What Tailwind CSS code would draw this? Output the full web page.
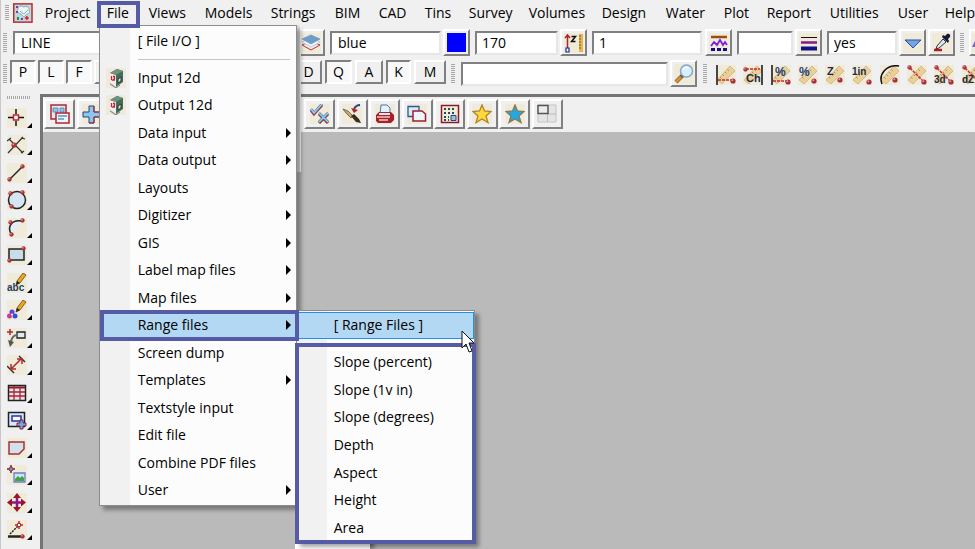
<!DOCTYPE html>
<html lang="en">
<head>
    <meta charset="UTF-8">
    <meta name="viewport" content="width=device-width, initial-scale=1.0">
    <title>12d Model</title>
    <script src="https://cdn.jsdelivr.net/npm/@tailwindcss/browser@4"></script>
</head>
<body class="bg-[#f0f0f0] text-black text-[14px] leading-5 font-['Open_Sans','Noto_Sans',sans-serif] overflow-hidden">

<!-- Shared icon parts -->
<svg class="hidden">
    <symbol id="ball" viewBox="0 0 6 6"><circle cx="3" cy="3" r="2.6" fill="#a8303a"/><circle cx="2.3" cy="2.2" r="1" fill="#e09a9c"/></symbol>
    <symbol id="ruler" viewBox="0 0 20 20">
        <rect width="20" height="20" fill="#f0ead8"/>
        <path d="M1 15 14 1l5 5L6 19z" fill="#e9cf9a" stroke="#d2b27a" stroke-width=".8"/>
        <path d="m4 12 1.500 1.500M6.500 9.500 8 11m1-4 1.500 1.500M11.500 4.500 13 6" stroke="#a3834a" stroke-width=".8" fill="none"/>
    </symbol>
    <symbol id="box12d" viewBox="0 0 20 20">
        <rect width="20" height="20" fill="#efeadb"/>
        <path d="m4 5 7-4 6 2v11l-7 5-6-4z" fill="#3f6f5b"/>
        <path d="m4 5 6 2v12l-6-4z" fill="#f3eeee"/>
        <path d="m4 5 7-4 6 2-7 4z" fill="#71917f"/>
        <path d="M5.500 8v4M7 8.500h1.500v2L7 12h2" stroke="#c8202c" stroke-width="1.300" fill="none"/>
        <path d="M12 11v4l3-2V9z" fill="#dfe5e0" stroke="#26382f"/>
        <path d="m4 16 6 4 4-3" stroke="#777" fill="none"/>
    </symbol>
    <symbol id="pencil" viewBox="0 0 20 20"><path d="m9 12 1-4 6-8 3 2-6 8z" fill="#e9a520" stroke="#6b4a14" stroke-width=".8"/><path d="m9 12 1-4 3 2z" fill="#222"/></symbol>
</svg>

<div class="relative flex flex-col min-h-screen border-l border-[#c8c8c8]">

    <!-- Menu bar -->
    <header class="flex h-[25px] mb-[2px] items-center pl-1">
        <span class="w-1 h-4 mr-1 bg-[repeating-linear-gradient(#a8a8a8_0_1px,#f0f0f0_1px_2px)]"></span>
        <svg class="w-5 h-5 mr-3" viewBox="0 0 20 20">
            <rect x=".75" y=".75" width="18.500" height="18.500" fill="#b9dce0" stroke="#c0272d" stroke-width="1.500"/>
            <path d="M5 6c0-3 4-4 6-2 3-2 6 1 5 3 2 2 0 4-2 4l-3 3-3-3c-3 0-4-3-3-5z" fill="#eef6f6" stroke="#8aa"/>
            <path d="m7 8 4 3 4-4" stroke="#7ba4ae" fill="none"/>
            <path d="M3 3h2v2H3zM3 8h2v2H3z" fill="#8a30a8"/><path d="M4 14h2v3H4z" fill="#168a3a"/><path d="M8 15h2v2H8z" fill="#7a1fb0"/><path d="M12 15h4M14 13v4" stroke="#e02020" stroke-width="1.500"/>
        </svg>
        <nav class="flex flex-1 h-full items-center whitespace-nowrap">
            <button class="w-[53px] text-left">Project</button>
            <div class="relative flex h-full items-center w-[51px] pl-[9px]">
                <button>File</button>
                <span class="absolute -left-px top-px w-[43px] h-[27px] border-4 border-[#555ba4] z-30"></span>

                <!-- File menu -->
                <div class="absolute left-px top-[25px] w-[198px] border border-[#8c8c8c] bg-[linear-gradient(to_right,#f1f1f1_30px,#fcfcfc_30px)] shadow-[4px_4px_4px_rgba(0,0,0,0.35)] py-px z-20">
                    <button class="flex w-full h-7 items-center pl-[38px]">[ File I/O ]</button>
                    <div class="h-[9px] pt-1 pl-[38px] pr-[6px]"><hr class="border-[#c4c4c4]"></div>
                    <div class="grid auto-rows-fr h-[440px]">
                        <button class="relative flex items-center pl-[38px]"><svg class="absolute left-[6px] w-5 h-5"><use href="#box12d"/></svg>Input 12d</button>
                        <button class="relative flex items-center pl-[38px]"><svg class="absolute left-[6px] w-5 h-5"><use href="#box12d"/></svg>Output 12d</button>
                        <button class="flex items-center justify-between pl-[38px] pr-[5px]">Data input<svg class="w-[5px] h-[10px]" viewBox="0 0 5 10"><path d="M0 0v10l5-5z"/></svg></button>
                        <button class="flex items-center justify-between pl-[38px] pr-[5px]">Data output<svg class="w-[5px] h-[10px]" viewBox="0 0 5 10"><path d="M0 0v10l5-5z"/></svg></button>
                        <button class="flex items-center justify-between pl-[38px] pr-[5px]">Layouts<svg class="w-[5px] h-[10px]" viewBox="0 0 5 10"><path d="M0 0v10l5-5z"/></svg></button>
                        <button class="flex items-center justify-between pl-[38px] pr-[5px]">Digitizer<svg class="w-[5px] h-[10px]" viewBox="0 0 5 10"><path d="M0 0v10l5-5z"/></svg></button>
                        <button class="flex items-center justify-between pl-[38px] pr-[5px]">GIS<svg class="w-[5px] h-[10px]" viewBox="0 0 5 10"><path d="M0 0v10l5-5z"/></svg></button>
                        <button class="flex items-center justify-between pl-[38px] pr-[5px]">Label map files<svg class="w-[5px] h-[10px]" viewBox="0 0 5 10"><path d="M0 0v10l5-5z"/></svg></button>
                        <button class="flex items-center justify-between pl-[38px] pr-[5px]">Map files<svg class="w-[5px] h-[10px]" viewBox="0 0 5 10"><path d="M0 0v10l5-5z"/></svg></button>
                        <div class="relative flex bg-[#b3d8f3]">
                            <button class="flex flex-1 items-center justify-between pl-[38px] pr-[5px]">Range files<svg class="w-[5px] h-[10px]" viewBox="0 0 5 10"><path d="M0 0v10l5-5z"/></svg></button>
                            <span class="absolute -top-[2px] -bottom-[2px] left-0 -right-[3px] border-4 border-[#555ba4] z-20"></span>

                            <!-- Range files submenu -->
                            <div class="absolute left-[196px] -top-[2px] w-[179px] border border-[#8c8c8c] bg-[linear-gradient(to_right,#f1f1f1_30px,#fcfcfc_30px)] shadow-[4px_4px_4px_rgba(0,0,0,0.35)] pt-px z-10">
                                <button class="flex w-full h-[27px] items-center pl-[36px] bg-[#b3d8f3] border border-[#2391ea]">[ Range Files ]</button>
                                <div class="relative pt-[10px]">
                                    <div class="grid auto-rows-fr h-[193px]">
                                        <button class="flex items-center pl-[37px]">Slope (percent)</button>
                                        <button class="flex items-center pl-[37px]">Slope (1v in)</button>
                                        <button class="flex items-center pl-[37px]">Slope (degrees)</button>
                                        <button class="flex items-center pl-[37px]">Depth</button>
                                        <button class="flex items-center pl-[37px]">Aspect</button>
                                        <button class="flex items-center pl-[37px]">Height</button>
                                        <button class="flex items-center pl-[37px]">Area</button>
                                    </div>
                                    <span class="absolute top-1 -bottom-[2px] -left-[2px] -right-[2px] border-4 border-[#555ba4]"></span>
                                    <svg class="absolute -top-[9px] right-0 w-[13px] h-[23px]" viewBox="0 0 13 23"><path d="M1 1v17l4-4 3 8 3-1-3-8h5z" fill="#fff" stroke="#111"/></svg>
                                </div>
                            </div>
                        </div>
                        <button class="flex items-center pl-[38px]">Screen dump</button>
                        <button class="flex items-center justify-between pl-[38px] pr-[5px]">Templates<svg class="w-[5px] h-[10px]" viewBox="0 0 5 10"><path d="M0 0v10l5-5z"/></svg></button>
                        <button class="flex items-center pl-[38px]">Textstyle input</button>
                        <button class="flex items-center pl-[38px]">Edit file</button>
                        <button class="flex items-center pl-[38px]">Combine PDF files</button>
                        <button class="flex items-center justify-between pl-[38px] pr-[5px]">User<svg class="w-[5px] h-[10px]" viewBox="0 0 5 10"><path d="M0 0v10l5-5z"/></svg></button>
                    </div>
                </div>
            </div>
            <button class="w-[56px] text-left">Views</button>
            <button class="w-[66px] text-left">Models</button>
            <button class="w-[64px] text-left">Strings</button>
            <button class="w-[44px] text-left">BIM</button>
            <button class="w-[46px] text-left">CAD</button>
            <button class="w-[44px] text-left">Tins</button>
            <button class="w-[60px] text-left">Survey</button>
            <button class="w-[73px] text-left">Volumes</button>
            <button class="w-[64px] text-left">Design</button>
            <button class="w-[58px] text-left">Water</button>
            <button class="w-[43px] text-left">Plot</button>
            <button class="w-[63px] text-left">Report</button>
            <button class="w-[68px] text-left">Utilities</button>
            <button class="w-[47px] text-left">User</button>
            <button class="text-left">Help</button>
        </nav>
    </header>

    <!-- String attribute toolbar -->
    <div class="flex h-[31px] items-center pl-[2px]">
        <span class="shrink-0 w-1 h-5 mr-[6px] bg-[repeating-linear-gradient(#a8a8a8_0_1px,#f0f0f0_1px_2px)]"></span>
        <input aria-label="Name" value="LINE" class="shrink-0 w-[280px] h-6 pl-[6px] bg-white border-2 border-t-[#808080] border-l-[#808080] border-r-[#e6e6e6] border-b-[#e6e6e6]">
        <button aria-label="Model" class="shrink-0 flex items-center justify-center w-[28px] h-[27px] ml-1 mr-[5px] border-2 border-t-white border-l-white border-r-[#808080] border-b-[#808080]">
            <svg class="w-5 h-5" viewBox="0 0 20 20"><rect width="20" height="20" fill="#f0ead8"/><path d="m1 12 9-4 9 4-9 5z" fill="#e8e8ee" stroke="#c8303c"/><path d="m1 9 9-4 9 4-9 5z" fill="#f3f6fb" stroke="#b4c4d6" stroke-width=".8"/><path d="m1 6 9-4 9 4-9 5z" fill="#6f9cc6" stroke="#6f9cc6" stroke-width=".8"/></svg>
        </button>
        <input aria-label="Colour" value="blue" class="shrink-0 w-[111px] h-6 pl-[6px] bg-white border-2 border-t-[#808080] border-l-[#808080] border-r-[#e6e6e6] border-b-[#e6e6e6]">
        <button aria-label="Pick colour" class="shrink-0 flex items-center justify-center w-[27px] h-[27px] ml-[2px] mr-[5px] border-2 border-t-white border-l-white border-r-[#808080] border-b-[#808080]"><span class="w-[19px] h-[19px] bg-[#0000ff]"></span></button>
        <input aria-label="Height" value="170" class="shrink-0 w-[83px] h-6 pl-[5px] bg-white border-2 border-t-[#808080] border-l-[#808080] border-r-[#e6e6e6] border-b-[#e6e6e6]">
        <button aria-label="Pick height" class="shrink-0 flex items-center justify-center w-[27px] h-[27px] ml-[2px] mr-[5px] border-2 border-t-white border-l-white border-r-[#808080] border-b-[#808080]">
            <svg class="w-5 h-5" viewBox="0 0 20 20"><rect width="20" height="20" fill="#f0ead8"/><path d="M3.500 2v13M1 5l2.500-3L6 5" fill="none" stroke="#b0222c" stroke-width="1.500"/><path d="M2 15h3v4H2z" fill="#fff" stroke="#1b2a80" stroke-width="1.200"/><path d="M7.500 3.500h4l-4 5h4" fill="none" stroke="#111" stroke-width="1.500"/><path d="M15 1h4v18h-4z" fill="#e9b54c"/><path d="M15 3h2m-2 3h2m-2 3h2m-2 3h2m-2 3h2" stroke="#7a5610"/></svg>
        </button>
        <input aria-label="Style" value="1" class="shrink-0 w-[110px] h-6 pl-[5px] bg-white border-2 border-t-[#808080] border-l-[#808080] border-r-[#e6e6e6] border-b-[#e6e6e6]">
        <button aria-label="Pick style" class="shrink-0 flex items-center justify-center w-[27px] h-[27px] ml-[3px] mr-[5px] border-2 border-t-white border-l-white border-r-[#808080] border-b-[#808080]">
            <svg class="w-5 h-5" viewBox="0 0 20 20"><rect width="20" height="20" fill="#f0ead8"/><path d="M2 4h16" stroke="#9a4c12" stroke-width="2.500"/><path d="m2 13 3-4 3 3 3-5 3 5 2-3 2 3" fill="none" stroke="#7a22e0" stroke-width="1.800"/><path d="M2 16.500h16" stroke="#10108a" stroke-width="3" stroke-dasharray="4 2"/></svg>
        </button>
        <input aria-label="Weight" class="shrink-0 w-[56px] h-6 pl-[5px] bg-white border-2 border-t-[#808080] border-l-[#808080] border-r-[#e6e6e6] border-b-[#e6e6e6]">
        <button aria-label="Pick weight" class="shrink-0 flex items-center justify-center w-[27px] h-[27px] ml-[2px] mr-[5px] border-2 border-t-white border-l-white border-r-[#808080] border-b-[#808080]">
            <svg class="w-5 h-5" viewBox="0 0 20 20"><rect width="20" height="20" fill="#f0ead8"/><path d="M2 4.500h16" stroke="#111"/><path d="M2 9.500h16" stroke="#8a1a8a" stroke-width="2.500"/><path d="M2 15.500h16" stroke="#10108a" stroke-width="4"/></svg>
        </button>
        <input aria-label="Tinable" value="yes" class="shrink-0 w-[70px] h-6 pl-[5px] bg-white border-2 border-t-[#808080] border-l-[#808080] border-r-[#e6e6e6] border-b-[#e6e6e6]">
        <button aria-label="Tinable list" class="shrink-0 flex items-center justify-center w-[27px] h-[27px] ml-[2px] mr-[2px] border-2 border-t-white border-l-white border-r-[#808080] border-b-[#808080]">
            <svg class="w-5 h-5" viewBox="0 0 20 20"><rect width="20" height="20" fill="#f0ead8"/><path d="M2 7h16l-8 8z" fill="#6fa6e8" stroke="#2a4fa0"/></svg>
        </button>
        <button aria-label="Pick from string" class="shrink-0 flex items-center justify-center w-[27px] h-[27px] mr-[5px] border-2 border-t-white border-l-white border-r-[#808080] border-b-[#808080]">
            <svg class="w-5 h-5" viewBox="0 0 20 20"><rect width="20" height="20" fill="#f0ead8"/><path d="M2 17h8" stroke="#b01c24" stroke-width="2.500"/><path d="m4 16 1-3 6-7 3 3-7 6z" fill="#dfe9f2" stroke="#333"/><path d="m10 4 6 6 1-2-1-2 2-2c1-2-1-4-3-3l-2 2-2-1z" fill="#151a3a"/></svg>
        </button>
        <span class="shrink-0 w-1 h-5 mr-[5px] bg-[repeating-linear-gradient(#a8a8a8_0_1px,#f0f0f0_1px_2px)]"></span>
        <button aria-label="Tin" class="shrink-0 flex items-center w-[27px] h-[27px] border-2 border-t-white border-l-white border-r-[#808080] border-b-[#808080]">
            <svg class="w-5 h-5" viewBox="0 0 20 20"><rect width="20" height="20" fill="#f0ead8"/><path d="m1 14 5-10 8 10z" fill="#7a5fd0"/></svg>
        </button>
    </div>

    <!-- Snap toolbar -->
    <div class="flex h-[31px] items-center pl-[2px] mb-[5px]">
        <span class="shrink-0 w-1 h-5 mr-[3px] bg-[repeating-linear-gradient(#a8a8a8_0_1px,#f0f0f0_1px_2px)]"></span>
        <div class="shrink-0 flex pb-[3px]">
            <button class="w-[26px] h-[24px] mr-[2px] bg-[#f8f8f8] border-2 border-t-[#808080] border-l-[#808080] border-r-white border-b-white">P</button>
            <button class="w-[26px] h-[24px] mr-[2px] bg-[#f8f8f8] border-2 border-t-[#808080] border-l-[#808080] border-r-white border-b-white">L</button>
            <button class="w-[26px] h-[24px] mr-[2px] bg-[#f8f8f8] border-2 border-t-[#808080] border-l-[#808080] border-r-white border-b-white">F</button>
            <button class="w-[26px] h-[24px] mr-[175px] border-2 border-t-white border-l-white border-r-[#808080] border-b-[#808080]">C</button>
            <button class="w-[27px] h-[24px] mr-[3px] border-2 border-t-white border-l-white border-r-[#808080] border-b-[#808080]">D</button>
            <button class="w-[27px] h-[24px] mr-[3px] bg-[#f8f8f8] border-2 border-t-[#808080] border-l-[#808080] border-r-white border-b-white">Q</button>
            <button class="w-[28px] h-[24px] mr-[3px] border-2 border-t-white border-l-white border-r-[#808080] border-b-[#808080]">A</button>
            <button class="w-[25px] h-[24px] mr-[3px] bg-[#f8f8f8] border-2 border-t-[#808080] border-l-[#808080] border-r-white border-b-white">K</button>
            <button class="w-[32px] h-[24px] mr-[5px] border-2 border-t-white border-l-white border-r-[#808080] border-b-[#808080]">M</button>
        </div>
        <span class="shrink-0 w-1 h-5 mr-[6px] bg-[repeating-linear-gradient(#a8a8a8_0_1px,#f0f0f0_1px_2px)]"></span>
        <input aria-label="Search" class="shrink-0 w-[207px] h-6 px-1 bg-white border-2 border-t-[#808080] border-l-[#808080] border-r-[#e6e6e6] border-b-[#e6e6e6]">
        <button aria-label="Find" class="shrink-0 flex items-center justify-center w-[27px] h-[27px] ml-[2px] mr-[6px] border-2 border-t-white border-l-white border-r-[#808080] border-b-[#808080]">
            <svg class="w-5 h-5" viewBox="0 0 20 20"><rect width="20" height="20" fill="#f0ead8"/><path d="m2 18 7-7" stroke="#555" stroke-width="4"/><path d="m2 18 5-5" stroke="#e88c28" stroke-width="3"/><circle cx="12.500" cy="7" r="6" fill="#d8effc" stroke="#7fa9cc" stroke-width="1.500"/><path d="M9 6c1-3 4-3 5-2" stroke="#fff" stroke-width="1.500" fill="none"/></svg>
        </button>
        <span class="shrink-0 w-1 h-5 mr-[9px] bg-[repeating-linear-gradient(#a8a8a8_0_1px,#f0f0f0_1px_2px)]"></span>
        <div class="shrink-0 grid grid-cols-10 w-[273px] pt-[2px]">
            <button aria-label="Offset"><svg class="w-5 h-5" viewBox="0 0 20 20"><use href="#ruler"/><path d="M1 0v20" stroke="#111" stroke-width="1.500"/><path d="M2 15h13" stroke="#c62a34" stroke-width="1.500" stroke-dasharray="3 1"/><use href="#ball" x="14" y="13" width="6" height="6"/></svg></button>
            <button aria-label="Chainage"><svg class="w-5 h-5" viewBox="0 0 20 20"><use href="#ruler"/><path d="M19 0v20" stroke="#111" stroke-width="1.500"/><path d="M3 4h14" stroke="#c62a34" stroke-width="1.500" stroke-dasharray="3 1"/><use href="#ball" x="0" y="2" width="5" height="5"/><text x="3" y="17" font-size="11" font-weight="700" fill="#222b45" font-family="Liberation Sans">Ch</text></svg></button>
            <button aria-label="Percent offset"><svg class="w-5 h-5" viewBox="0 0 20 20"><use href="#ruler"/><path d="M1 0v20" stroke="#111" stroke-width="1.500"/><path d="M2 16h13" stroke="#c62a34" stroke-width="1.500" stroke-dasharray="3 1"/><use href="#ball" x="14" y="14" width="6" height="6"/><text x="4" y="11" font-size="12" font-weight="700" fill="#1d3f78" font-family="Liberation Sans">%</text></svg></button>
            <button aria-label="Grade"><svg class="w-5 h-5" viewBox="0 0 20 20"><use href="#ruler"/><use href="#ball" x="13" y="13" width="6" height="6"/><text x="1" y="11" font-size="12" font-weight="700" fill="#1d3f78" font-family="Liberation Sans">%</text></svg></button>
            <button aria-label="Level"><svg class="w-5 h-5" viewBox="0 0 20 20"><use href="#ruler"/><use href="#ball" x="12" y="12" width="6" height="6"/><text x="2" y="10" font-size="11" font-weight="700" fill="#222b45" font-family="Liberation Sans">Z</text></svg></button>
            <button aria-label="Slope"><svg class="w-5 h-5" viewBox="0 0 20 20"><use href="#ruler"/><use href="#ball" x="14" y="14" width="6" height="6"/><text x="0" y="10" font-size="10" font-weight="700" fill="#222b45" font-family="Liberation Sans">1in</text></svg></button>
            <button aria-label="Arc"><svg class="w-5 h-5" viewBox="0 0 20 20"><use href="#ruler"/><path d="M2 19C-2 9 7-1 19 1" stroke="#111" stroke-width="1.500" fill="none"/><use href="#ball" x="12" y="12" width="6" height="6"/></svg></button>
            <button aria-label="Distance"><svg class="w-5 h-5" viewBox="0 0 20 20"><use href="#ruler"/><path d="m3 3 14 14" stroke="#c62a34" stroke-width="1.500" stroke-dasharray="3 1"/><use href="#ball" width="5" height="5"/><use href="#ball" x="14" y="14" width="6" height="6"/></svg></button>
            <button aria-label="Distance 3d"><svg class="w-5 h-5" viewBox="0 0 20 20"><use href="#ruler"/><path d="m3 3 14 14" stroke="#c62a34" stroke-width="1.500" stroke-dasharray="3 1"/><use href="#ball" width="5" height="5"/><use href="#ball" x="14" y="14" width="6" height="6"/><text x="0" y="18" font-size="10" font-weight="700" fill="#222b45" font-family="Liberation Sans">3d</text></svg></button>
            <button aria-label="Height difference"><svg class="w-5 h-5" viewBox="0 0 20 20"><use href="#ruler"/><path d="m3 3 14 14" stroke="#c62a34" stroke-width="1.500" stroke-dasharray="3 1"/><use href="#ball" width="5" height="5"/><text x="0" y="18" font-size="10" font-weight="700" fill="#222b45" font-family="Liberation Sans">dZ</text></svg></button>
        </div>
    </div>

    <div class="flex flex-1">
        <!-- CAD toolbar -->
        <aside class="w-[39px] shrink-0 pl-[6px] pt-[2px]">
            <div class="w-6 h-[3px] mb-[5px] bg-[repeating-linear-gradient(to_right,#a8a8a8_0_1px,#f0f0f0_1px_2px)]"></div>
            <div class="grid auto-rows-fr h-[440px]">
                <button aria-label="Point" class="flex items-center"><svg class="w-[25px] h-5" viewBox="0 0 25 20"><path d="M0 0h20v20H0z" fill="#f0ead8"/><path d="M9 1v5m0 7v5M1 9.500h5m6 0h5" stroke="#111" stroke-width="1.500"/><path d="M6.500 7h5v5h-5z" fill="#fff" stroke="#b8242e" stroke-width="1.500"/><path d="M25 15v5h-5z"/></svg></button>
                <button aria-label="Intersection" class="flex items-center"><svg class="w-[25px] h-5" viewBox="0 0 25 20"><path d="M0 0h20v20H0z" fill="#f0ead8"/><path d="m2 4 14 14M1 18 16 2M0 6l4-3m10 0 4 1m-4 14 3-2" stroke="#333" stroke-width="1.200"/><use href="#ball" x="4" y="7" width="6" height="6"/><path d="M25 15v5h-5z"/></svg></button>
                <button aria-label="Line" class="flex items-center"><svg class="w-[25px] h-5" viewBox="0 0 25 20"><path d="M0 0h20v20H0z" fill="#f0ead8"/><path d="M3 16 16 3" stroke="#222" stroke-width="1.500"/><use href="#ball" x="0" y="14" width="5" height="5"/><use href="#ball" x="13" y="1" width="5" height="5"/><path d="M25 15v5h-5z"/></svg></button>
                <button aria-label="Circle" class="flex items-center"><svg class="w-[25px] h-5" viewBox="0 0 25 20"><path d="M0 0h20v20H0z" fill="#f0ead8"/><circle cx="10" cy="10" r="8.500" fill="#d5e5f2" stroke="#222" stroke-width="1.500"/><use href="#ball" x="1" y="1" width="5" height="5"/><use href="#ball" x="13" y="0" width="5" height="5"/><use href="#ball" x="2" y="14" width="5" height="5"/><path d="M25 15v5h-5z"/></svg></button>
                <button aria-label="Arc" class="flex items-center"><svg class="w-[25px] h-5" viewBox="0 0 25 20"><path d="M0 0h20v20H0z" fill="#f0ead8"/><path d="M5 17C-1 9 5 1 15 3z" fill="#e4edf5"/><path d="M5 17C-1 9 5 1 15 3" fill="none" stroke="#222" stroke-width="1.500"/><use href="#ball" x="1" y="2" width="5" height="5"/><use href="#ball" x="13" y="0" width="5" height="5"/><use href="#ball" x="2" y="14" width="5" height="5"/><path d="M25 15v5h-5z"/></svg></button>
                <button aria-label="Rectangle" class="flex items-center"><svg class="w-[25px] h-5" viewBox="0 0 25 20"><path d="M0 0h20v20H0z" fill="#f0ead8"/><path d="M2 4h15v11H2z" fill="#c9dde6" stroke="#222" stroke-width="1.500"/><use href="#ball" x="14" y="1" width="5" height="5"/><use href="#ball" x="0" y="13" width="5" height="5"/><path d="M25 15v5h-5z"/></svg></button>
                <button aria-label="Text" class="flex items-center"><svg class="w-[25px] h-5" viewBox="0 0 25 20"><path d="M0 0h20v20H0z" fill="#f0ead8"/><text x="0" y="18" font-size="10" font-weight="700" fill="#20405c" font-family="Liberation Sans">abc</text><use href="#pencil" width="20" height="20"/><path d="M25 15v5h-5z"/></svg></button>
                <button aria-label="Symbol" class="flex items-center"><svg class="w-[25px] h-5" viewBox="0 0 25 20"><path d="M0 0h20v20H0z" fill="#f0ead8"/><circle cx="5" cy="12" r="2.500" fill="#6a3fd0"/><circle cx="2.500" cy="16" r="2.500" fill="#d03a90"/><circle cx="8" cy="16" r="2.500" fill="#2a50e0"/><circle cx="5" cy="14.500" r="1" fill="#fff"/><use href="#pencil" width="20" height="20"/><path d="M25 15v5h-5z"/></svg></button>
                <button aria-label="Leader" class="flex items-center"><svg class="w-[25px] h-5" viewBox="0 0 25 20"><path d="M0 0h20v20H0z" fill="#f0ead8"/><path d="M0 4h6M3 1v6" stroke="#b8242e" stroke-width="1.500"/><path d="M10 4h8v6h-8z" fill="#dceaf4" stroke="#222" stroke-width="1.300"/><path d="M10 7c-4 0-5 3-7 9" stroke="#666" stroke-width="2" fill="none"/><path d="m1 12 2 7 4-5z" fill="#555"/><path d="M25 15v5h-5z"/></svg></button>
                <button aria-label="Dimension" class="flex items-center"><svg class="w-[25px] h-5" viewBox="0 0 25 20"><path d="M0 0h20v20H0z" fill="#f0ead8"/><path d="m0 11 7 7M12 1l6 6" stroke="#333" stroke-width="1.500"/><path d="m5 13 9-9M4 9v5h5M10 4h5v5" stroke="#b8242e" stroke-width="1.500" fill="none"/><path d="M25 15v5h-5z"/></svg></button>
                <button aria-label="Table" class="flex items-center"><svg class="w-[25px] h-5" viewBox="0 0 25 20"><path d="M1.500 2.500h17v15h-17z" fill="#f2dfe4" stroke="#222" stroke-width="1.500"/><path d="M2 4.500h16" stroke="#8b1b28" stroke-width="2"/><path d="M2 9h16M2 13h16M7 3v14M13 3v14" stroke="#a02838" stroke-width="1.300"/><path d="M25 15v5h-5z"/></svg></button>
                <button aria-label="Viewport" class="flex items-center"><svg class="w-[25px] h-5" viewBox="0 0 25 20"><path d="M1.500 2.500h16v14h-16z" fill="#dce9f2" stroke="#222" stroke-width="1.500"/><path d="M5 6h9v5H5z" fill="#fff" stroke="#2632b0" stroke-width="1.500"/><path d="M13 10h3v3h3v3h-3v3h-3v-3h-3v-3h3z" fill="#69aee0" stroke="#8b1b38"/><path d="M25 15v5h-5z"/></svg></button>
                <button aria-label="Polygon" class="flex items-center"><svg class="w-[25px] h-5" viewBox="0 0 25 20"><path d="M0 0h20v20H0z" fill="#f0ead8"/><path d="M2 4h15v7l-5 5H2z" fill="#d2e2ea" stroke="#a8303a" stroke-width="1.500"/><path d="M25 15v5h-5z"/></svg></button>
                <button aria-label="Image" class="flex items-center"><svg class="w-[25px] h-5" viewBox="0 0 25 20"><path d="M0 0h20v20H0z" fill="#f0ead8"/><path d="M4 0v8M0 4h8" stroke="#8b1b28" stroke-width="1.500"/><circle cx="4" cy="4" r="2" fill="#5fa0cc" stroke="#8b1b28" stroke-width=".8"/><path d="M7 8h11v9H7z" fill="#c8e4f6" stroke="#6d7bc8" stroke-width="1.300"/><path d="M8 16v-2l3-3 2 2 2-2 2 2v3z" fill="#3fa53a"/><path d="M25 15v5h-5z"/></svg></button>
                <button aria-label="Move" class="flex items-center"><svg class="w-[25px] h-5" viewBox="0 0 25 20"><path d="M0 0h20v20H0z" fill="#f0ead8"/><path d="M10 3v13M3 9.500h14" stroke="#86188c" stroke-width="2.500"/><path d="m10 0 4 5H6zM10 19l4-5H6zM0 9.500l5-4v8zM19 9.500l-5-4v8z" fill="#9a1626"/><path d="M25 15v5h-5z"/></svg></button>
                <button aria-label="Edit point" class="flex items-center"><svg class="w-[25px] h-5" viewBox="0 0 25 20"><path d="M0 0h20v20H0z" fill="#f0ead8"/><path d="m3 14 8-8" stroke="#222" stroke-width="1.500" stroke-dasharray="2 1"/><path d="M1 16.500h14" stroke="#222" stroke-width="2.500"/><path d="M12 1v8M8 5h8" stroke="#b8242e" stroke-width="1.500"/><path d="M10.500 3.500h3v3h-3z" fill="#fff" stroke="#b8242e"/><use href="#ball" x="13" y="14" width="5" height="5"/><path d="M25 15v5h-5z"/></svg></button>
            </div>
        </aside>

        <!-- Plan view -->
        <main class="flex-1 min-w-0 flex flex-col border-t-[3px] border-l-[3px] border-[#747474] bg-[#bababa]">
            <div class="bg-[#f0f0f0] h-[35px] pt-[2px] border-l border-white">
                <div class="grid grid-cols-16 w-[520px]">
                    <button aria-label="Views" class="flex items-center justify-center w-[31px] h-[30px] border-2 border-t-white border-l-white border-r-[#808080] border-b-[#808080]"><svg class="w-5 h-5" viewBox="0 0 20 20"><path d="M1 1h15v14H1z" fill="#dbe9f4" stroke="#b0262e" stroke-width="1.500"/><path d="M3 4h5v4H3zM10 4h4v4h-4z" fill="#9cc0e0" stroke="#4e7dab" stroke-width=".8"/><path d="M6 9h13v10H6z" fill="#eef5fa" stroke="#b0262e" stroke-width="1.500"/><path d="M8 12h9M8 15h6" stroke="#5f93c4" stroke-width="1.300"/></svg></button>
                    <button aria-label="Add model" class="flex items-center justify-center w-[31px] h-[30px] border-2 border-t-white border-l-white border-r-[#808080] border-b-[#808080]"><svg class="w-5 h-5" viewBox="0 0 20 20"><rect width="20" height="20" fill="#f0ead8"/><path d="M7 2h5v6h6v5h-6v6H7v-6H1V8h6z" fill="#8cc6ec" stroke="#27447c"/><path d="M12 2v6h6v5h-6v6H7" fill="none" stroke="#b0262e"/></svg></button>
                    <button aria-label="Models on and off" class="col-start-9 flex items-center justify-center w-[31px] h-[30px] border-2 border-t-white border-l-white border-r-[#808080] border-b-[#808080]"><svg class="w-5 h-5" viewBox="0 0 20 20"><rect width="20" height="20" fill="#f0ead8"/><g fill="none"><path d="m1 6 3 4 8-9M9 10l9 9M18 10l-9 9" stroke="#a8303a" stroke-width="3"/><path d="m1 5 3 4 8-9M9 9l9 9M18 9l-9 9" stroke="#3f6f9c" stroke-width="2.500"/><path d="m1 5 3 4 8-9M9 9l9 9M18 9l-9 9" stroke="#9accf0" stroke-width="1.500"/></g></svg></button>
                    <button aria-label="Redraw" class="flex items-center justify-center w-[31px] h-[30px] border-2 border-t-white border-l-white border-r-[#808080] border-b-[#808080]"><svg class="w-5 h-5" viewBox="0 0 20 20"><rect width="20" height="20" fill="#f0ead8"/><path d="m1 5 5 2 5 5-2 2-5-5z" fill="#d8a860" stroke="#555" stroke-width=".8"/><path d="m9 12 3-2 5 5 2 4-5-1z" fill="#3a2a20"/><path d="M18 1c-4 0-5 2-6 4" stroke="#28467c" stroke-width="2" fill="none"/><path d="m9 4 3 5 4-3z" fill="#b0262e"/></svg></button>
                    <button aria-label="Print" class="flex items-center justify-center w-[31px] h-[30px] border-2 border-t-white border-l-white border-r-[#808080] border-b-[#808080]"><svg class="w-5 h-5" viewBox="0 0 20 20"><rect width="20" height="20" fill="#f0ead8"/><path d="M6 1h6l3 3v6H5z" fill="#e6f1fb" stroke="#4478b8"/><path d="m1 11 3-3h12l3 3v5l-3 3H3l-2-2z" fill="#a8202a"/><path d="M4 9h11v2H4z" fill="#d8e8f8"/><path d="M2 13h13M4 16h9" stroke="#eec8c4" stroke-width="1.300"/></svg></button>
                    <button aria-label="Copy view" class="flex items-center justify-center w-[31px] h-[30px] border-2 border-t-white border-l-white border-r-[#808080] border-b-[#808080]"><svg class="w-5 h-5" viewBox="0 0 20 20"><rect width="20" height="20" fill="#f0ead8"/><path d="M1 2.500h11v10H1z" fill="#dbe9f4" stroke="#2d5c90" stroke-width="1.300"/><path d="M6 7h9l3.500 3v7H6z" fill="#eef5fa" stroke="#9c2030" stroke-width="1.500"/></svg></button>
                    <button aria-label="Settings" class="flex items-center justify-center w-[31px] h-[30px] border-2 border-t-white border-l-white border-r-[#808080] border-b-[#808080]"><svg class="w-5 h-5" viewBox="0 0 20 20"><path d="M1.500 1.500h17v17h-17z" fill="#f3edcf" stroke="#8b1b28" stroke-width="1.500"/><path d="M4 5h12M4 9h12M4 13h5M4 16h5" stroke="#28467c" stroke-width="2" stroke-dasharray="2 2"/><path d="M11 11.500h5v5h-5z" fill="#9cc0e0" stroke="#28467c"/></svg></button>
                    <button aria-label="Favourites" class="flex items-center justify-center w-[31px] h-[30px] border-2 border-t-white border-l-white border-r-[#808080] border-b-[#808080]"><svg class="w-5 h-5" viewBox="0 0 20 20"><rect width="20" height="20" fill="#f0ead8"/><path d="m10 1 2.500 6 6.500.500-5 4.500 2 6.500-6-3.500-6 3.500 2-6.500-5-4.500L7.500 7z" fill="#ffd83c" stroke="#b08426" stroke-width="1.300"/></svg></button>
                    <button aria-label="User favourites" class="flex items-center justify-center w-[31px] h-[30px] border-2 border-t-white border-l-white border-r-[#808080] border-b-[#808080]"><svg class="w-5 h-5" viewBox="0 0 20 20"><rect width="20" height="20" fill="#f0ead8"/><path d="m10 1 2.500 6 6.500.500-5 4.500 2 6.500-6-3.500-6 3.500 2-6.500-5-4.500L7.500 7z" fill="#22a8e4" stroke="#8a7a4a" stroke-width="1.300"/></svg></button>
                    <button aria-label="Tile" class="flex items-center justify-center w-[31px] h-[30px] border-2 border-t-white border-l-white border-r-[#808080] border-b-[#808080]"><svg class="w-5 h-5" viewBox="0 0 20 20"><path d="M1 1h18v17H1z" fill="#e4e4e4" stroke="#c4c4c4"/><path d="M11 10h8M10.500 10v8" stroke="#bbb"/><path d="M1 1.500h10v8H1z" fill="#ececec" stroke="#555" stroke-width="1.500"/></svg></button>
                </div>
            </div>
        </main>
    </div>

    <!-- Edges of the panel behind the menus -->
    <div class="absolute left-[295px] top-[25px] w-[5px] h-[147px] bg-[#e2e2e2] border-r border-white"></div>
    <div class="absolute left-[294px] bottom-0 w-[75px] h-[10px] bg-white shadow-[4px_0_4px_rgba(0,0,0,0.4)]"></div>
</div>
</body>
</html>
